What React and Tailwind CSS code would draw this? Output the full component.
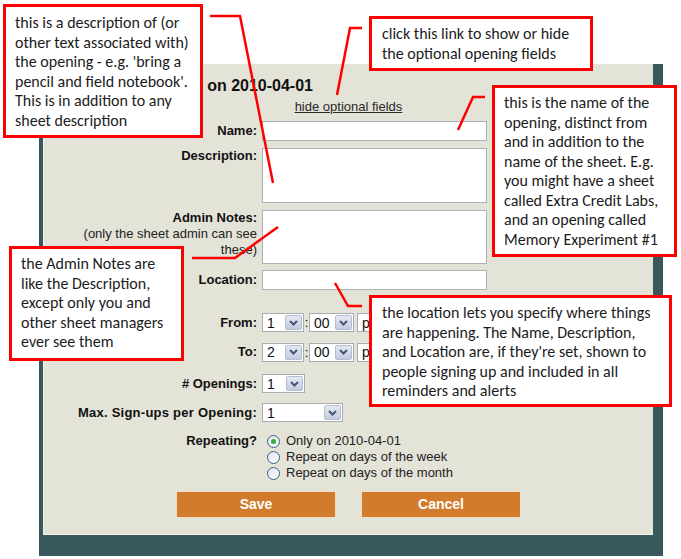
import React from 'react';

const callouts = [
  {
    pos: 'left-[3px] top-[4px] w-[200px] h-[134px] pt-[6px] pl-[9px]',
    lines: [
      'this is a description of (or',
      'other text associated with)',
      "the opening  - e.g. 'bring a",
      "pencil and field notebook'.",
      'This is in addition to any',
      'sheet description',
    ],
  },
  {
    pos: 'left-[369px] top-[16px] w-[224px] h-[55px] pt-[5px] pl-[10px]',
    lines: ['click this link to show or hide', 'the optional  opening  fields'],
  },
  {
    pos: 'left-[492px] top-[85px] w-[185px] h-[172px] pt-[5px] pl-[9px]',
    lines: [
      'this is the name of the',
      'opening, distinct from',
      'and in addition to the',
      'name of the  sheet. E.g.',
      'you might have a sheet',
      'called Extra Credit Labs,',
      'and an opening called',
      'Memory Experiment #1',
    ],
  },
  {
    pos: 'left-[9px] top-[246px] w-[175px] h-[115px] pt-[5px] pl-[9px]',
    lines: [
      'the Admin Notes are',
      'like the Description,',
      'except only you and',
      'other sheet managers',
      'ever see them',
    ],
  },
  {
    pos: 'left-[369px] top-[295px] w-[303px] h-[112px] pt-[5px] pl-[10px]',
    lines: [
      'the location lets you specify where things',
      'are happening. The Name, Description,',
      "and Location are, if they're set, shown  to",
      'people signing up and included in all',
      'reminders and alerts',
    ],
  },
];

const connectors = [
  '210,16 240,16 273,183',
  '362,28 350,28 337,95',
  '485,97 473,97 458,130',
  '192,258 235,258 278,227',
  '362,306 348,306 335,283',
];

function Select({ value, className }) {
  return (
    <div className={'flex h-[19px] items-center border border-[#a5acb2] bg-white ' + className}>
      <span className="pl-[4px] text-[14px] leading-none text-[#111]">{value}</span>
      <span className="ml-auto mr-px flex h-[15px] w-[17px] items-center justify-center rounded-[2px] border border-[#b4bdd2] bg-gradient-to-b from-[#e6e9f2] to-[#c3cbdf]">
        <svg width="9" height="6" viewBox="0 0 9 6">
          <path d="M1 1 L4.5 4.5 L8 1" fill="none" stroke="#45557a" strokeWidth="2" />
        </svg>
      </span>
    </div>
  );
}

function Radio({ checked, label }) {
  return (
    <div className="flex h-[16px] items-center">
      <span className="flex h-[13px] w-[13px] items-center justify-center rounded-full border border-[#3d5f82] bg-gradient-to-br from-[#dfe3ea] to-white">
        {checked && <span className="h-[5px] w-[5px] rounded-full bg-[#2fae45]" />}
      </span>
      <span className="ml-[6px] text-[13px] text-[#222]">{label}</span>
    </div>
  );
}

const label = 'w-[213px] shrink-0 text-right text-[13px] font-bold leading-[16px] text-[#111]';
const field = 'ml-[5px] w-[225px] border border-[#abb1b7] bg-white';

export default function App() {
  return (
    <div className="relative h-[559px] w-[681px] overflow-hidden bg-white font-['Liberation_Sans',Arial,sans-serif]">
      <div className="ml-[39px] mt-[64px] h-[492px] w-[624px] border-b-[21px] border-l-4 border-r-[10px] border-[#38585e] bg-[#e4e3d8]">
        <div className="h-full border-b border-l border-[#f3f2eb]">
          <div className="w-[269px] pt-[12px] text-right text-[16px] font-bold leading-[20px] text-[#111]">
            on 2010-04-01
          </div>
          <div className="mt-[3px] text-center text-[13px] leading-[16px] text-[#2a2a2a] underline">hide optional fields</div>

          <div className="mt-[6px] flex items-center">
            <div className={label}>Name:</div>
            <div className={field + ' h-[20px]'} />
          </div>

          <div className="mt-[7px] flex items-start">
            <div className={label}>Description:</div>
            <div className={field + ' h-[55px]'} />
          </div>

          <div className="mt-[7px] flex items-start">
            <div className={label}>
              Admin Notes:
              <div className="font-normal text-[#222]">
                (only the sheet admin can see
                <br />
                these)
              </div>
            </div>
            <div className={field + ' h-[54px]'} />
          </div>

          <div className="mt-[6px] flex items-center">
            <div className={label}>Location:</div>
            <div className={field + ' h-[20px]'} />
          </div>

          <div className="mt-[23px] flex items-center">
            <div className={label}>From:</div>
            <div className="ml-[5px] flex items-center">
              <Select value="1" className="w-[42px]" />
              <span className="w-[5px] text-center text-[13px]">:</span>
              <Select value="00" className="w-[45px]" />
              <Select value="pm" className="ml-[3px] w-[45px]" />
            </div>
          </div>

          <div className="mt-[10px] flex items-center">
            <div className={label}>To:</div>
            <div className="ml-[5px] flex items-center">
              <Select value="2" className="w-[42px]" />
              <span className="w-[5px] text-center text-[13px]">:</span>
              <Select value="00" className="w-[45px]" />
              <Select value="pm" className="ml-[3px] w-[45px]" />
            </div>
          </div>

          <div className="mt-[12px] flex items-center">
            <div className={label}># Openings:</div>
            <Select value="1" className="ml-[5px] w-[43px]" />
          </div>

          <div className="mt-[10px] flex items-center">
            <div className={label + ' tracking-[0.25px]'}>Max. Sign-ups per Opening:</div>
            <Select value="1" className="ml-[5px] w-[81px]" />
          </div>

          <div className="mt-[11px] flex items-start">
            <div className={label}>Repeating?</div>
            <div className="ml-[10px]">
              <Radio checked label="Only on 2010-04-01" />
              <Radio label="Repeat on days of the week" />
              <Radio label="Repeat on days of the month" />
            </div>
          </div>

          <div className="mt-[10px] flex justify-center gap-[25px]">
            <button className="h-[27px] w-[160px] border border-[#f2dcc4] bg-[#d27b2c] text-[14px] font-bold text-white">Save</button>
            <button className="h-[27px] w-[160px] border border-[#f2dcc4] bg-[#d27b2c] text-[14px] font-bold text-white">Cancel</button>
          </div>
        </div>
      </div>

      <svg className="pointer-events-none absolute left-0 top-0" width="681" height="559">
        {connectors.map((p) => (
          <polyline key={p} points={p} fill="none" stroke="#ff0000" strokeWidth="2.5" />
        ))}
      </svg>

      {callouts.map((c, i) => (
        <div
          key={i}
          className={'absolute border-[3px] border-[#ff0000] bg-white text-[16px] leading-[19.5px] text-[#1b1b1b] font-[Carlito,Lato,sans-serif] whitespace-nowrap ' + c.pos}
        >
          {c.lines.map((l) => (
            <div key={l}>{l}</div>
          ))}
        </div>
      ))}
    </div>
  );
}
